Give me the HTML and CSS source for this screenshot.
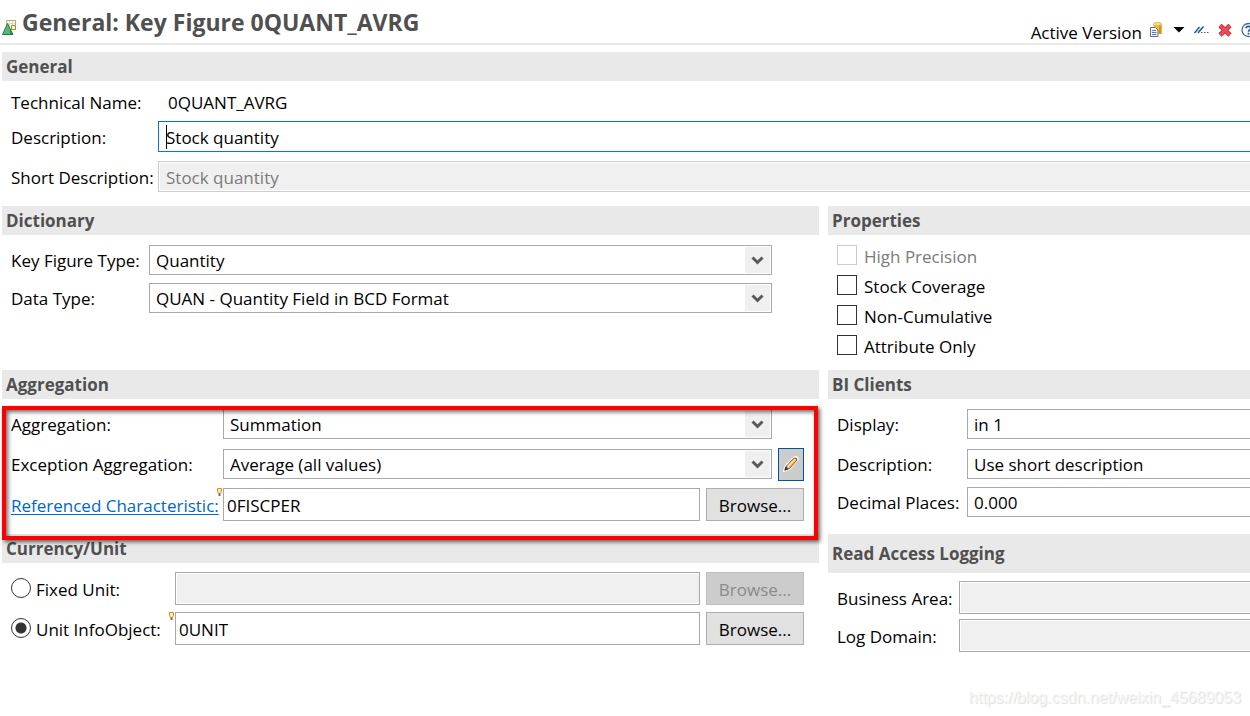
FILE: index.html
```html
<!DOCTYPE html>
<html lang="en">
<head>
<meta charset="utf-8">
<title>General: Key Figure 0QUANT_AVRG</title>
<link rel="stylesheet" href="styles.css">
</head>
<body>
<header class="page-head">
  <svg class="head-icon" width="14" height="16" viewBox="0 0 14 16" aria-hidden="true">
    <path d="M4.500 1.500h9v9h-8z" fill="#fffdf4" stroke="#c9a94f"/>
    <path d="M7.500 2v5M10.500 2v4M5 4.500h8" stroke="#cfdcec"/>
    <path d="M9.500 6.500h4v4h-4z" fill="#fff3cf" stroke="#b98a1c"/>
    <path d="M5.500 4.500L11 15.500H.5z" fill="#55b878"/>
    <path d="M5.500 4.500L8 9v6.500h3z" fill="#2f8f58"/>
    <path d="M5.500 4.500L.5 15.500H11z" fill="none" stroke="#24774a"/>
  </svg>
  <h1>General: Key Figure 0QUANT_AVRG</h1>
  <div class="toolbar">
    <span class="version">Active Version</span>
    <button class="tool" aria-label="Versions">
      <svg width="12" height="16" viewBox="0 0 12 16">
        <path d="M3.500 2v10h8V2z" fill="#f5bd3c"/>
        <path d="M9 3v9h2.500V2z" fill="#d9940f"/>
        <ellipse cx="7.500" cy="2" rx="4" ry="1.600" fill="#ffe38a" stroke="#e0a52c" stroke-width=".8"/>
        <path d="M.5 5.500h5l2.500 2.500v6.500H.5z" fill="#f2f6fc" stroke="#5a7199"/>
        <path d="M2 8.500h4M2 10.500h4.500M2 12.500h4.500" stroke="#5b7cb4"/>
      </svg>
    </button>
    <button class="tool" aria-label="Choose version">
      <svg width="12" height="16" viewBox="0 0 12 16"><path d="M.5 5h11L6 10.500z" fill="#000"/></svg>
    </button>
    <button class="tool" aria-label="Where used">
      <svg width="15" height="16" viewBox="0 0 15 16">
        <path d="M.5 11L5.500 5M4 11L9.500 4.500" stroke="#1d4f86" stroke-width="1.300" fill="none"/>
        <path d="M2.500 11L7.500 5" stroke="#9dbbd8" stroke-width=".7"/>
        <path d="M7 10.500h1.500M10 10.500h1.500M13 10.500h1.500" stroke="#3a5f94"/>
      </svg>
    </button>
    <button class="tool" aria-label="Delete">
      <svg width="14" height="16" viewBox="0 0 14 16">
        <path d="M2 3.500L12 13M12 3.500L2 13" stroke="#bd2733" stroke-width="4.600"/>
        <path d="M2.200 3.700L11.800 12.800M11.800 3.700L2.200 12.800" stroke="#ec4c55" stroke-width="3"/>
      </svg>
    </button>
    <button class="tool" aria-label="Help">
      <svg width="9" height="16" viewBox="0 0 9 16">
        <circle cx="7.500" cy="8" r="6.500" fill="#fff" stroke="#3b6ea5" stroke-width="1.300"/>
        <path d="M5 6.300C5.200 3.600 9.800 3.700 9.800 6.200C9.800 8 7.500 7.800 7.500 9.700M7.500 10.800v1.700" fill="none" stroke="#23578f" stroke-width="1.700"/>
      </svg>
    </button>
  </div>
</header>

<main>
  <section class="section general">
    <h2>General</h2>
    <div class="fields">
      <div class="row name-row"><span class="label">Technical Name:</span><span class="value">0QUANT_AVRG</span></div>
      <div class="row"><label class="label" for="desc">Description:</label>
        <span class="control"><input class="box bleed active" id="desc" type="text" value="Stock quantity"><i class="caret"></i></span></div>
      <div class="row"><label class="label" for="sdesc">Short Description:</label>
        <span class="control"><input class="box bleed muted" id="sdesc" type="text" value="Stock quantity" disabled></span></div>
    </div>
  </section>

  <div class="columns">
    <section class="section dictionary">
      <h2>Dictionary</h2>
      <div class="fields">
        <div class="row"><label class="label" for="kft">Key Figure Type:</label>
          <span class="control"><select class="box" id="kft"><option>Quantity</option></select><svg class="drop" viewBox="0 0 24 26" aria-hidden="true"><path d="M7 10.500l5 5 5-5"/></svg></span></div>
        <div class="row"><label class="label" for="dt">Data Type:</label>
          <span class="control"><select class="box" id="dt"><option>QUAN - Quantity Field in BCD Format</option></select><svg class="drop" viewBox="0 0 24 26" aria-hidden="true"><path d="M7 10.500l5 5 5-5"/></svg></span></div>
      </div>
    </section>

    <section class="section properties">
      <h2>Properties</h2>
      <div class="fields">
        <label class="check off"><input type="checkbox" disabled><span>High Precision</span></label>
        <label class="check"><input type="checkbox"><span>Stock Coverage</span></label>
        <label class="check"><input type="checkbox"><span>Non-Cumulative</span></label>
        <label class="check"><input type="checkbox"><span>Attribute Only</span></label>
      </div>
    </section>

    <section class="section aggregation">
      <h2>Aggregation</h2>
      <div class="fields">
        <div class="row wide"><label class="label" for="agg">Aggregation:</label>
          <span class="control"><select class="box" id="agg"><option>Summation</option></select><svg class="drop" viewBox="0 0 24 26" aria-hidden="true"><path d="M7 10.500l5 5 5-5"/></svg></span>
          <span class="slot"></span></div>
        <div class="row"><label class="label" for="exc">Exception Aggregation:</label>
          <span class="control"><select class="box" id="exc"><option>Average (all values)</option></select><svg class="drop" viewBox="0 0 24 26" aria-hidden="true"><path d="M7 10.500l5 5 5-5"/></svg></span>
          <span class="slot"><button class="edit" aria-label="Edit">
            <svg width="16" height="16" viewBox="0 0 16 16">
              <path d="M1 15l1.500-5L11 1.500q3-1.500 4 1.500L6.500 13z" fill="#fff" stroke="#fff" stroke-width="2"/>
              <path d="M2 14l1.500-4L11 2.200q2.800-1 3 1.800L6.500 12.500z" fill="#f3b765" stroke="#8a4a1a"/>
              <path d="M4.800 10.500l7.200-7.200" stroke="#ffe5b2" stroke-width="1.500"/>
              <path d="M1.300 14.700l1.200-4.200 3 2.600z" fill="#27335c"/>
            </svg></button></span></div>
        <div class="row"><span class="label"><a href="#ref" id="reflabel">Referenced Characteristic:</a></span>
          <span class="control"><svg class="bulb" width="5" height="8" viewBox="0 0 5 8" aria-hidden="true"><path d="M.5 .5h4v3L3.500 5.500h-2L.5 3.500z" fill="#ffe9b0" stroke="#e08a1c"/><path d="M2.500 5.500V8" stroke="#6c7078" stroke-width="2"/></svg><input class="box tall" id="ref" type="text" value="0FISCPER" aria-labelledby="reflabel"></span>
          <button class="browse">Browse...</button></div>
      </div>
      <div class="highlight"></div>
    </section>

    <section class="section clients">
      <h2>BI Clients</h2>
      <div class="fields">
        <div class="row"><label class="label" for="disp">Display:</label><span class="control"><select class="box bleed" id="disp"><option>in 1</option></select></span></div>
        <div class="row"><label class="label" for="cdesc">Description:</label><span class="control"><select class="box bleed" id="cdesc"><option>Use short description</option></select></span></div>
        <div class="row"><label class="label" for="dec">Decimal Places:</label><span class="control"><select class="box bleed" id="dec"><option>0.000</option></select></span></div>
      </div>
    </section>

    <section class="section unit">
      <h2>Currency/Unit</h2>
      <div class="fields">
        <div class="row"><label class="label radio"><input type="radio" name="unit"><span>Fixed Unit:</span></label>
          <span class="control"><input class="box tall muted-field" type="text" aria-label="Fixed Unit" disabled></span>
          <button class="browse" disabled>Browse...</button></div>
        <div class="row"><label class="label radio"><input type="radio" name="unit" checked><span>Unit InfoObject:</span></label>
          <span class="control"><svg class="bulb" width="5" height="8" viewBox="0 0 5 8" aria-hidden="true"><path d="M.5 .5h4v3L3.500 5.500h-2L.5 3.500z" fill="#ffe9b0" stroke="#e08a1c"/><path d="M2.500 5.500V8" stroke="#6c7078" stroke-width="2"/></svg><input class="box tall" type="text" value="0UNIT" aria-label="Unit InfoObject"></span>
          <button class="browse">Browse...</button></div>
      </div>
    </section>

    <section class="section logging">
      <h2>Read Access Logging</h2>
      <div class="fields">
        <div class="row"><label class="label" for="ba">Business Area:</label><span class="control"><input class="box tall bleed muted-field" id="ba" type="text" disabled></span></div>
        <div class="row"><label class="label" for="ld">Log Domain:</label><span class="control"><input class="box tall bleed muted-field" id="ld" type="text" disabled></span></div>
      </div>
    </section>
  </div>
</main>
<footer>https://blog.csdn.net/weixin_45689053</footer>
</body>
</html>
```
FILE: styles.css
```css
* { box-sizing: border-box; }
body {
  margin: 0;
  min-height: 100vh;
  display: flex;
  flex-direction: column;
  background: #fff;
  color: #000;
  font: 17px/24px "Open Sans", "Noto Sans", sans-serif;
}
input, select, button { font: inherit; color: inherit; margin: 0; border-radius: 0; }
.page-head {
  display: flex;
  align-items: flex-start;
  height: 45px;
  padding-left: 2px;
  border-bottom: 2px solid #e9e9e9;
}
.head-icon { margin: 19px 6px 0 0; }
h1 { margin: 0; padding-top: 6px; font-size: 23px; line-height: 32px; color: #505050; white-space: nowrap; }
.toolbar { display: flex; align-items: center; height: 24px; margin: 18px 0 0 auto; }
.version { padding-top: 6px; margin-right: 8px; white-space: nowrap; }
.tool { display: flex; padding: 0; border: 0; background: none; margin-left: 9px; }
.version + .tool { margin-left: 0; }
.version + .tool + .tool { margin-left: 11px; }

main { padding: 7px 0 0 2px; }
.section { position: relative; min-width: 0; }
h2 {
  margin: 0;
  padding: 2px 4px;
  font-size: 17px;
  line-height: 25px;
  color: #505050;
  background: #e9e9e9;
}
.fields { display: flex; flex-direction: column; gap: 8px; padding: 10px 15px 0 9px; }
.row { display: flex; align-items: center; gap: 6px; }
.label { flex: none; white-space: nowrap; padding-top: 2px; }
.control { position: relative; flex: 1; min-width: 0; display: flex; }
a { color: #0066cc; text-underline-offset: 2px; }

.box {
  width: 100%;
  height: 30px;
  padding: 2px 6px 0;
  border: 1px solid #a9a9ad;
  background: #fff;
  appearance: none;
  outline: none;
}
.tall { height: 33px; padding: 2px 3px 0; }
.bleed { border-right: 0; }
.active { border-color: #0078d7; }
.muted { border-color: #ccc; background: #f0f0f0; color: #7a7a7a; box-shadow: inset 1px 1px #fff, inset 0 -1px #fff; }
.muted-field { background: #f0f0f0; box-shadow: inset 1px 1px #fff, inset 0 -1px #fff; }
.drop {
  position: absolute;
  top: 2px;
  right: 2px;
  width: 25px;
  height: 26px;
  background: #f0f0f0;
  fill: none;
  stroke: #5a5a5a;
  stroke-width: 3;
  pointer-events: none;
}
.caret { position: absolute; left: 8px; top: 4px; width: 1px; height: 24px; background: #000; }
.bulb { position: absolute; left: -6px; top: 0; }

.general .fields { padding: 8px 0 14px 9px; gap: 9px; }
.general .label { width: 147px; }
.general .row { gap: 0; }
.general .box { height: 31px; padding: 2px 7px 0; }
.general .name-row { align-items: flex-start; height: 23px; }
.value { padding: 2px 0 0 10px; }

.columns { display: grid; grid-template-columns: minmax(0, 817fr) minmax(0, 422fr); column-gap: 9px; }
.dictionary .fields { padding-right: 47px; }
.dictionary .label { width: 132px; }
.properties .fields { gap: 0; padding-bottom: 5px; }
.check { display: flex; gap: 7px; height: 30px; }
.check span { line-height: 23px; }
.check input { appearance: none; width: 20px; height: 20px; border: 1px solid #333; background: #fff; }
.off { color: #7a7a7a; }
.check.off input { border-color: #ccc; }

.aggregation .fields { gap: 9px; padding-bottom: 13px; }
.aggregation .label { width: 206px; }
.aggregation .wide { margin-bottom: 1px; }
.aggregation .row { height: 30px; }
.aggregation .row:last-child { height: 33px; }
.slot { flex: none; width: 26px; display: flex; }
.edit {
  width: 26px;
  height: 33px;
  padding: 0;
  display: flex;
  align-items: center;
  justify-content: center;
  border: 1px solid #00549e;
  background: #ccc;
}
.browse { flex: none; width: 98px; height: 33px; padding: 2px 0 0; border: 1px solid #adadad; background: #e1e1e1; }
.browse:disabled { background: #ccc; border-color: #bfbfbf; color: #8a8a8a; }
.highlight {
  position: absolute;
  inset: 36px 1px -6px 0;
  border: 4px solid #f00;
  box-shadow: 2px 2px 4px rgba(0, 0, 0, .6), inset 2px 2px 4px rgba(0, 0, 0, .6);
  pointer-events: none;
  z-index: 1;
}

.clients .fields { gap: 8px; padding-right: 0; padding-bottom: 17px; }
.clients .row:first-child { margin-bottom: 2px; }
.clients .label { width: 124px; }
.unit .fields { padding-top: 9px; gap: 7px; }
.unit .label { width: 158px; }
.radio { display: flex; align-items: flex-start; gap: 5px; }
.radio input { appearance: none; width: 20px; height: 20px; border: 1px solid #333; border-radius: 50%; background: #fff; }
.radio input:checked { background: radial-gradient(circle, #333 0 5px, #fff 6px); }
.logging h2 { padding: 7px 4px; }
.logging .fields { padding: 8px 0 0 9px; gap: 5px; }
.logging .label { width: 116px; }

footer {
  margin-top: auto;
  padding: 0 9px 6px 0;
  text-align: right;
  font: 16px/24px "Liberation Sans", sans-serif;
  color: #f6f6f6;
  text-shadow: 1px 1px 1px #ddd;
}
```
